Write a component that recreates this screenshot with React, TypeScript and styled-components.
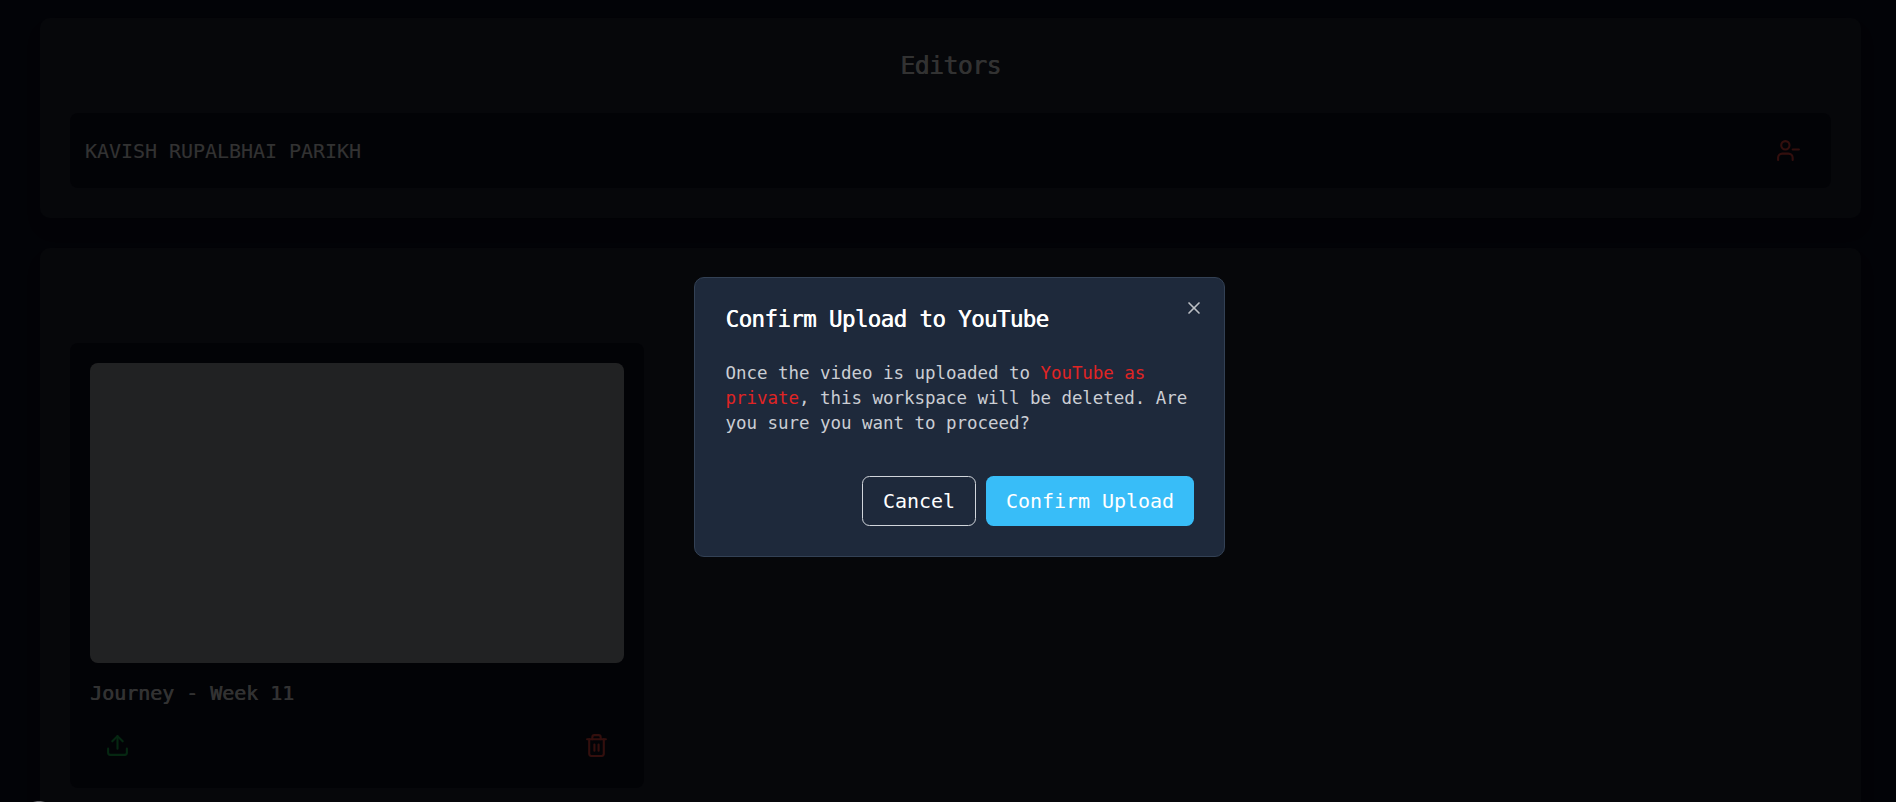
import React from 'react';
import styled, { createGlobalStyle } from 'styled-components';
import { Trash2, Upload, UserMinus, X } from 'lucide-react';

const Global = createGlobalStyle`
  *, *::before, *::after { box-sizing: border-box; }
  html, body { margin: 0; height: 100%; overflow: hidden; }
  body {
    background: #0c0f23;
    color: #fafafa;
    font-family: 'DejaVu Sans Mono', 'Liberation Mono', monospace;
    font-size: 20px;
    line-height: 30px;
    letter-spacing: -0.002em;
  }
  h1, h2, h3, p { margin: 0; font-weight: 400; }
  button { font: inherit; letter-spacing: inherit; cursor: pointer; }
`;

const Page = styled.main`
  display: flex;
  flex-direction: column;
  gap: 30px;
  height: 802px;
  padding: 18px 35px 0 40px;
  overflow: hidden;
`;

const Panel = styled.section<{ $grow?: boolean }>`
  flex: ${p => (p.$grow ? '0 0 600px' : '0 0 200px')};
  padding: ${p => (p.$grow ? '95px 30px 30px' : '30px')};
  border-radius: 10px;
  background: #1e2332;
  box-shadow: 0 12px 19px -4px rgba(0, 0, 0, 0.12), 0 5px 8px -5px rgba(0, 0, 0, 0.12);
`;

const PanelTitle = styled.h1`
  margin-bottom: 30px;
  font-size: 25px;
  line-height: 35px;
  letter-spacing: -0.027em;
  text-align: center;
  text-shadow: 0.4px 0 0 currentColor;
`;

const EditorRow = styled.div`
  display: flex;
  align-items: center;
  justify-content: space-between;
  height: 75px;
  padding: 0 15px;
  border-radius: 8px;
  background: #0c0f20;
`;

const IconButton = styled.button<{ $color: string }>`
  display: flex;
  padding: 10px 15px;
  border: 0;
  background: none;
  color: ${p => p.$color};
`;

const VideoCard = styled.article`
  width: 574px;
  height: 445px;
  padding: 20px;
  border-radius: 8px;
  background: #0c0f20;
`;

const Thumbnail = styled.div`
  height: 300px;
  border-radius: 8px;
  background: #a6aaad;
`;

const VideoTitle = styled.h2`
  margin: 15px 0;
  font-size: 20px;
  line-height: 30px;
  text-shadow: 0.4px 0 0 currentColor;
`;

const Actions = styled.div`
  display: flex;
  justify-content: space-between;
`;

const Backdrop = styled.div`
  position: fixed;
  inset: 0;
  display: flex;
  padding: 277px 0 0 694px;
  align-items: flex-start;
  background: rgba(0, 0, 0, 0.8);
`;

const Dialog = styled.div`
  position: relative;
  width: 531px;
  height: 280px;
  padding: 30px;
  border: 1px solid #334155;
  border-radius: 10px;
  background: #1e293b;
`;

const DialogTitle = styled.h2`
  padding-left: 0.5px;
  color: #fff;
  font-size: 22.5px;
  line-height: 23px;
  letter-spacing: -0.028em;
  text-shadow: 0.5px 0 0 currentColor;
`;

const Message = styled.p`
  margin-top: 30px;
  padding-left: 0.5px;
  color: #cbced4;
  font-size: 17.5px;
  line-height: 25px;
`;

const Warning = styled.span`
  color: #e02424;
`;

const Footer = styled.div`
  display: flex;
  justify-content: flex-end;
  gap: 10px;
  margin-top: 40px;
`;

const Button = styled.button<{ $primary?: boolean }>`
  height: 50px;
  padding: 0 20px;
  border: ${p => (p.$primary ? '0' : '1px solid #d1d5db')};
  border-radius: 7.5px;
  background: ${p => (p.$primary ? '#38bdf8' : 'transparent')};
  color: #fff;
`;

const Close = styled.button`
  position: absolute;
  top: 20px;
  right: 20px;
  display: flex;
  padding: 0;
  border: 0;
  background: none;
  color: #bcbfc4;
`;

const EdgeMark = styled.div`
  position: fixed;
  left: 33px;
  bottom: 0;
  width: 12px;
  height: 1px;
  background: linear-gradient(90deg, transparent, #66666a 35%, #66666a 65%, transparent);
`;

export default function App() {
  return (
    <>
      <Global />
      <Page>
        <Panel>
          <PanelTitle>Editors</PanelTitle>
          <EditorRow>
            <span>KAVISH RUPALBHAI PARIKH</span>
            <IconButton $color="#ff4c44" aria-label="Remove editor">
              <UserMinus size={25} />
            </IconButton>
          </EditorRow>
        </Panel>
        <Panel $grow>
          <VideoCard>
            <Thumbnail />
            <VideoTitle>Journey - Week 11</VideoTitle>
            <Actions>
              <IconButton $color="#1cc058" aria-label="Upload">
                <Upload size={25} />
              </IconButton>
              <IconButton $color="#ff4c44" aria-label="Delete">
                <Trash2 size={25} />
              </IconButton>
            </Actions>
          </VideoCard>
        </Panel>
      </Page>
      <Backdrop>
        <Dialog role="dialog">
          <DialogTitle>Confirm Upload to YouTube</DialogTitle>
          <Message>
            Once the video is uploaded to <Warning>YouTube as private</Warning>, this workspace will
            be deleted. Are you sure you want to proceed?
          </Message>
          <Footer>
            <Button>Cancel</Button>
            <Button $primary>Confirm Upload</Button>
          </Footer>
          <Close aria-label="Close">
            <X size={20} />
          </Close>
        </Dialog>
      </Backdrop>
      <EdgeMark />
    </>
  );
}
